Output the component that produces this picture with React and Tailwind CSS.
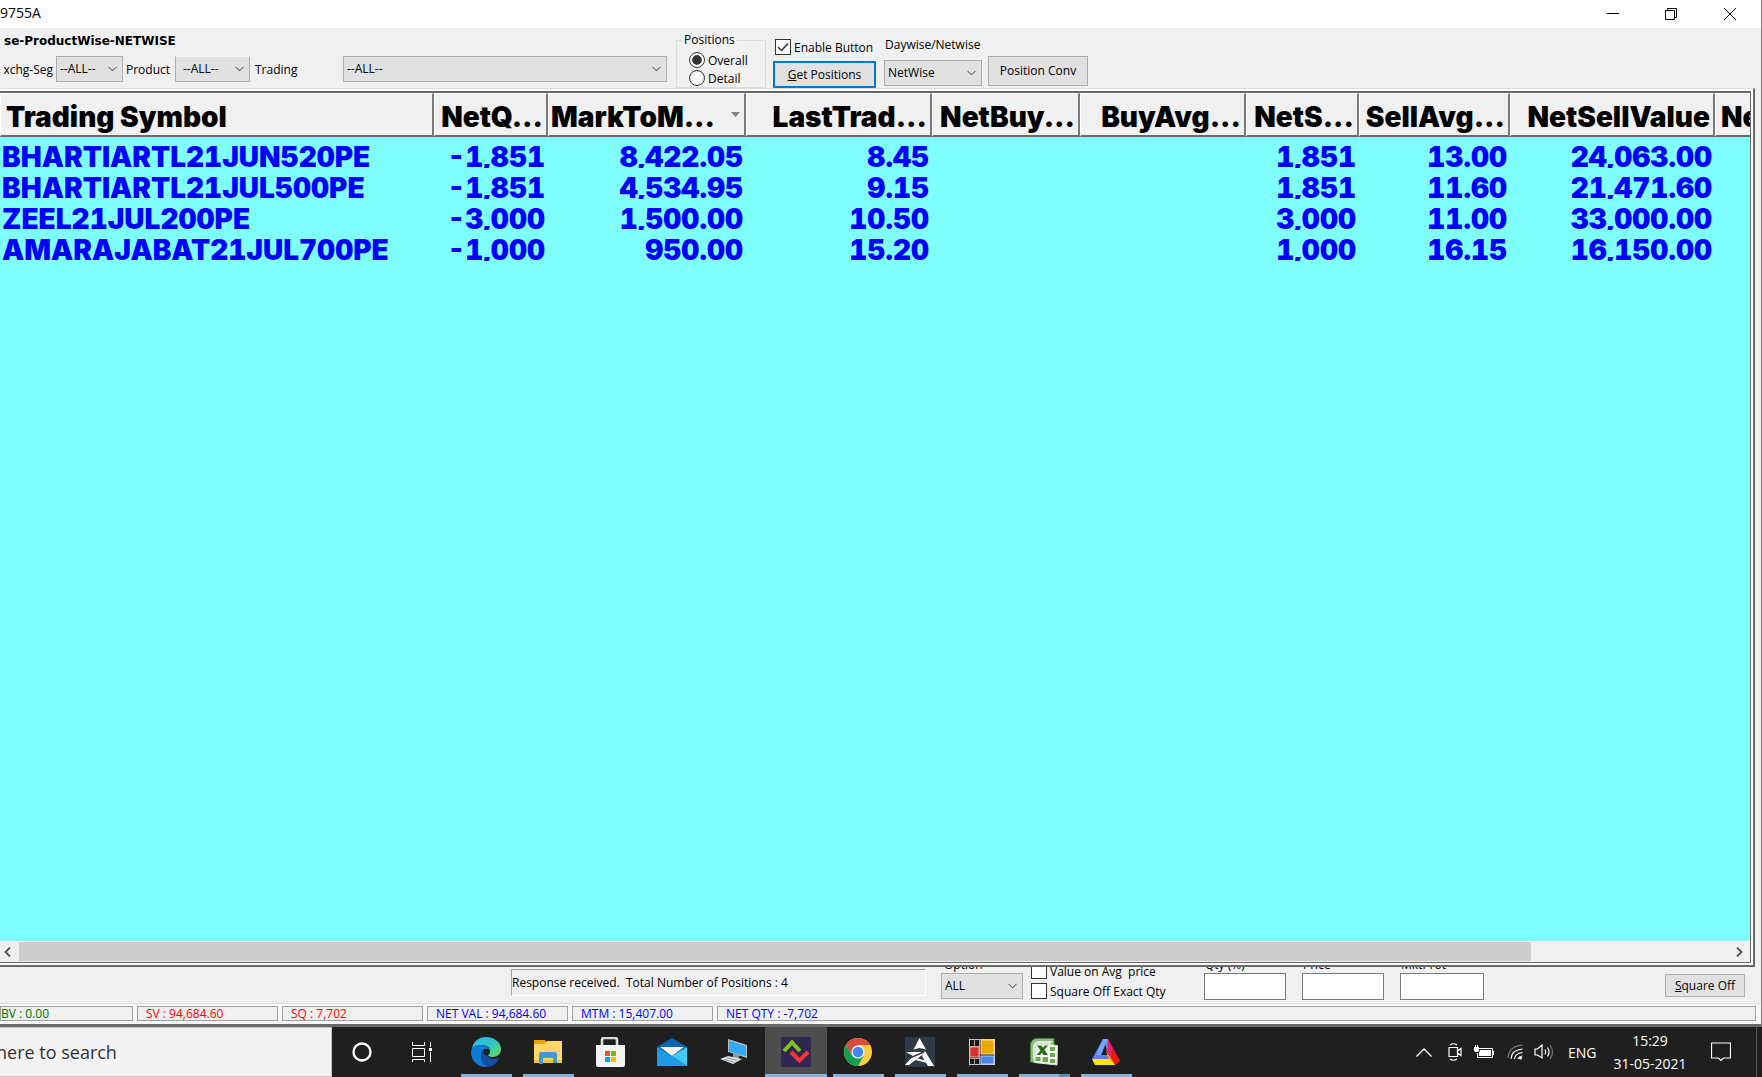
import { useState } from 'react'
import { ChevronDown } from 'lucide-react'

const columns = [
  { label: 'Trading Symbol', key: 'symbol', left: true },
  { label: 'NetQ...', key: 'netQty' },
  { label: 'MarkToM...', key: 'mtm', sorted: true },
  { label: 'LastTrad...', key: 'ltp' },
  { label: 'NetBuy...', key: 'netBuy' },
  { label: 'BuyAvg...', key: 'buyAvg' },
  { label: 'NetS...', key: 'netSell' },
  { label: 'SellAvg...', key: 'sellAvg' },
  { label: 'NetSellValue', key: 'sellValue' },
  { label: 'Ne', key: 'netValue', left: true },
]

const positions = [
  { symbol: 'BHARTIARTL21JUN520PE', netQty: '-1,851', mtm: '8,422.05', ltp: '8.45', netSell: '1,851', sellAvg: '13.00', sellValue: '24,063.00' },
  { symbol: 'BHARTIARTL21JUL500PE', netQty: '-1,851', mtm: '4,534.95', ltp: '9.15', netSell: '1,851', sellAvg: '11.60', sellValue: '21,471.60' },
  { symbol: 'ZEEL21JUL200PE', netQty: '-3,000', mtm: '1,500.00', ltp: '10.50', netSell: '3,000', sellAvg: '11.00', sellValue: '33,000.00' },
  { symbol: 'AMARAJABAT21JUL700PE', netQty: '-1,000', mtm: '950.00', ltp: '15.20', netSell: '1,000', sellAvg: '16.15', sellValue: '16,150.00' },
]

const totals = [
  { text: 'BV : 0.00', className: 'w-[133px] pl-0 text-[#007000]' },
  { text: 'SV : 94,684.60', className: 'w-[141px] pl-2 text-[#ff0000]' },
  { text: 'SQ : 7,702', className: 'w-[141px] pl-2 text-[#ff0000]' },
  { text: 'NET VAL : 94,684.60', className: 'w-[141px] pl-2 text-[#0000ff]' },
  { text: 'MTM : 15,407.00', className: 'w-[141px] pl-2 text-[#0000ff]' },
  { text: 'NET QTY : -7,702', className: 'flex-1 pl-2 text-[#0000ff]' },
]

function Select({ label, options, className = '', wrap = '' }) {
  return (
    <div className={'relative ' + wrap}>
      <select
        aria-label={label}
        className={'h-full w-full appearance-none border border-[#adadad] bg-[#e1e1e1] pr-4 pl-[3px] outline-none ' + className}
      >
        {options.map(o => <option key={o}>{o}</option>)}
      </select>
      <ChevronDown size={15} strokeWidth={1.5} className="pointer-events-none absolute top-1/2 right-[3px] -translate-y-1/2 text-[#333333]" />
    </div>
  )
}

function Check({ label, checked, onChange }) {
  return (
    <label className="flex h-4 items-center gap-[3px] whitespace-pre">
      <span className="grid h-4 w-4 shrink-0">
        <input
          type="checkbox"
          checked={checked}
          onChange={onChange}
          className="col-start-1 row-start-1 h-4 w-4 appearance-none border border-[#333333] bg-white"
        />
        {checked && (
          <svg viewBox="0 0 16 16" className="pointer-events-none col-start-1 row-start-1 h-4 w-4">
            <path d="M3 8 L6.5 11.5 L13 4.5" fill="none" stroke="#333" strokeWidth="1.5" />
          </svg>
        )}
      </span>
      <span className="pt-px">{label}</span>
    </label>
  )
}

function Radio({ label, checked, onChange }) {
  return (
    <label className="flex h-4 items-center gap-[3px]">
      <input
        type="radio"
        name="positions"
        checked={checked}
        onChange={onChange}
        className="h-4 w-4 appearance-none rounded-full border border-[#333333] bg-white bg-clip-content p-[2px] checked:bg-[#333333] checked:shadow-[inset_0_0_0_2px_#ffffff]"
      />
      <span className="pt-px">{label}</span>
    </label>
  )
}

function TitleBar() {
  return (
    <header className="flex h-7 shrink-0 items-center justify-between bg-white">
      <h1 className="mb-[3px] h-6 text-[14px] leading-6">9755A</h1>
      <div className="flex h-6 items-center pr-px">
        <button aria-label="Minimize" className="flex w-[58px] justify-center">
          <svg width="12" height="12" viewBox="0 0 12 12"><path d="M0 5.5H12" stroke="#000" /></svg>
        </button>
        <button aria-label="Restore" className="flex w-[58px] justify-center">
          <svg width="12" height="12" viewBox="0 0 12 12" fill="none" stroke="#000">
            <path d="M.5 2.5H9.5V11.5H.5ZM2.5 2.5V.5H11.5V9.5H9.5" />
          </svg>
        </button>
        <button aria-label="Close" className="flex w-[60px] justify-center">
          <svg width="12" height="12" viewBox="0 0 12 12"><path d="M0 0L12 12M12 0L0 12" stroke="#000" /></svg>
        </button>
      </div>
    </header>
  )
}

function Toolbar() {
  const [view, setView] = useState('Overall')
  const [enabled, setEnabled] = useState(true)

  return (
    <div className="flex h-[60px] shrink-0 items-start">
      <div className="shrink-0 pt-[5px]">
        <h2 className="pl-1 font-['DejaVu_Sans',sans-serif] text-[12px] leading-4 font-bold">se-ProductWise-NETWISE</h2>
        <div className="mt-[7px] flex h-[26px] items-center">
          <span className="w-14 pt-px pr-[3px] text-right">xchg-Seg</span>
          <Select label="Exchange segment" options={['--ALL--']} wrap="h-[26px] w-[67px]" />
          <span className="w-[52px] pt-px pl-[3px]">Product</span>
          <Select label="Product" options={['--ALL--']} wrap="h-[26px] w-[75px]" className="border-t-[#f0f0f0] pl-[7px]" />
          <span className="w-[93px] pt-px pl-[5px]">Trading</span>
          <Select label="Trading" options={['--ALL--']} wrap="h-[26px] w-[324px]" />
        </div>
      </div>

      <fieldset className="mt-1 ml-[9px] h-[56px] w-[90px] shrink-0 border border-[#dcdcdc] px-3">
        <legend className="-ml-[7px] px-[2px] leading-4">Positions</legend>
        <div className="flex flex-col gap-[2px] pt-1">
          <Radio label="Overall" checked={view === 'Overall'} onChange={() => setView('Overall')} />
          <Radio label="Detail" checked={view === 'Detail'} onChange={() => setView('Detail')} />
        </div>
      </fieldset>

      <div className="ml-[7px] w-[103px] shrink-0 pt-[11px]">
        <div className="pl-[2px]">
          <Check label="Enable Button" checked={enabled} onChange={e => setEnabled(e.target.checked)} />
        </div>
        <button className="mt-[6px] h-[27px] w-full border-2 border-[#0078d7] bg-[#e1e1e1]">
          <span className="underline">G</span>et Positions
        </button>
      </div>

      <div className="ml-2 w-[98px] shrink-0 pt-[9px]">
        <p className="pl-px leading-4 whitespace-nowrap">Daywise/Netwise</p>
        <Select label="Daywise/Netwise" options={['NetWise', 'DayWise']} wrap="mt-[7px] h-[26px]" />
      </div>

      <button className="mt-7 ml-[6px] h-[30px] w-[100px] shrink-0 border border-[#adadad] bg-[#e1e1e1]">Position Conv</button>
    </div>
  )
}

function PositionsTable() {
  return (
    <div className="flex-1 overflow-hidden bg-[#80ffff]">
      <table className="w-full table-fixed border-collapse font-['Inter',sans-serif] text-[28px]">
        <colgroup>
          <col className="w-[434px]" />
          <col className="w-[114px]" />
          <col className="w-[198px]" />
          <col className="w-[186px]" />
          <col className="w-[148px]" />
          <col className="w-[166px]" />
          <col className="w-[113px]" />
          <col className="w-[151px]" />
          <col className="w-[205px]" />
          <col />
        </colgroup>
        <thead>
          <tr>
            {columns.map(c => (
              <th key={c.key} className="group overflow-hidden p-0 font-black">
                <div className={'flex h-11 items-center border-t border-r-2 border-b-2 border-l border-t-white border-r-[#7a7a7a] border-b-[#696969] border-l-white bg-[#f0f0f0] pt-1 whitespace-nowrap group-last:border-r-0 ' + (c.left ? 'pl-[5px]' : 'justify-end pr-[3px]')}>
                  {c.label}
                  {c.sorted && (
                    <svg width="9" height="5" viewBox="0 0 9 5" className="mr-px mb-1 ml-4 shrink-0"><path d="M0 0H9L4.5 5Z" fill="#808080" /></svg>
                  )}
                </div>
              </th>
            ))}
          </tr>
        </thead>
        <tbody className="font-black text-[#0000ff] tabular-nums">
          {positions.map(p => (
            <tr key={p.symbol}>
              {columns.map(c => (
                <td key={c.key} className="p-0">
                  <div className={'h-[31px] overflow-hidden leading-[41px] whitespace-nowrap ' + (c.left ? 'pl-[2px]' : 'pr-[3px] text-right')}>
                    {p[c.key]}
                  </div>
                </td>
              ))}
            </tr>
          ))}
        </tbody>
      </table>
    </div>
  )
}

function ScrollBar() {
  return (
    <div className="flex h-[21px] shrink-0 items-stretch border-t border-white bg-[#f0f0f0]">
      <button aria-label="Scroll left" className="flex w-[19px] items-center justify-center pr-1">
        <svg width="7" height="10" viewBox="0 0 7 10"><path d="M6 .5L1.5 5L6 9.5" fill="none" stroke="#505050" strokeWidth="1.8" /></svg>
      </button>
      <div className="flex-1">
        <div className="h-[19px] w-[calc(100%-197px)] bg-[#cdcdcd]" />
      </div>
      <button aria-label="Scroll right" className="flex w-[22px] items-center justify-center">
        <svg width="7" height="10" viewBox="0 0 7 10"><path d="M1 .5L5.5 5L1 9.5" fill="none" stroke="#505050" strokeWidth="1.8" /></svg>
      </button>
    </div>
  )
}

function SmallField({ label, className }) {
  return (
    <label className={'flex shrink-0 flex-col ' + className}>
      <span className="h-4 pl-px leading-4 whitespace-nowrap">{label}</span>
      <input type="text" className="h-[27px] w-full border border-[#7a7a7a] bg-white px-1 outline-none" />
    </label>
  )
}

function SquareOffBar() {
  const [avg, setAvg] = useState(false)
  const [exact, setExact] = useState(false)

  return (
    <div className="flex h-9 shrink-0 items-end justify-between overflow-hidden pr-4">
      <div className="flex items-end">
        <div role="status" className="mb-[7px] ml-[511px] h-[27px] w-[415px] shrink-0 border border-t-[#a0a0a0] border-r-white border-b-white border-l-[#a0a0a0] leading-[25px] whitespace-pre">
          Response received.  Total Number of Positions : 4
        </div>
        <div className="mb-1 ml-[15px] flex w-[82px] shrink-0 flex-col">
          <span className="h-4 pl-[3px] leading-4">Option</span>
          <Select label="Option" options={['ALL']} wrap="h-[26px]" />
        </div>
        <div className="mb-1 ml-2 flex w-[173px] shrink-0 flex-col gap-1">
          <Check label="Value on Avg  price" checked={avg} onChange={e => setAvg(e.target.checked)} />
          <Check label="Square Off Exact Qty" checked={exact} onChange={e => setExact(e.target.checked)} />
        </div>
        <SmallField label="Qty (%)" className="mb-[3px] w-[82px]" />
        <SmallField label="Price" className="mb-[3px] ml-4 w-[82px]" />
        <SmallField label="MktProt" className="mb-[3px] ml-4 w-[84px]" />
      </div>
      <button className="mb-[6px] h-[23px] w-20 shrink-0 border border-[#adadad] bg-[#e1e1e1]">
        <span className="underline">S</span>quare Off
      </button>
    </div>
  )
}

function TotalsBar() {
  return (
    <div className="flex h-6 shrink-0 gap-1 border-t border-b-[3px] border-t-[#dcdcdc] border-b-[#696969] bg-[#f8f8f8] pt-[2px] pr-[5px] pb-[3px] text-[12px]">
      {totals.map(t => (
        <div key={t.text} className={'border border-[#a0a0a0] bg-[#f0f0f0] leading-[13px] whitespace-nowrap ' + t.className}>{t.text}</div>
      ))}
    </div>
  )
}

function EdgeIcon() {
  return (
    <svg width="30" height="30" viewBox="0 0 30 30">
      <defs>
        <linearGradient id="edgeTop" x1="0" y1="0" x2="1" y2="1">
          <stop offset="0" stopColor="#2fb4e9" />
          <stop offset=".5" stopColor="#2ec4c8" />
          <stop offset="1" stopColor="#6be04a" />
        </linearGradient>
      </defs>
      <path d="M1 12C2 4 8 0 15 0c9 0 15 6 15 12 0 5-4 8-8 8-3 0-5-1-5-2 0-1 2-2 2-4 0-4-4-6-8-6-5 0-9 2-10 4Z" fill="url(#edgeTop)" />
      <path d="M0 15C0 9 6 8 10 8c5 0 9 3 9 6 0 0-2-2-4-2-4 0-5 4-5 7 0 5 4 9 8 11C6 31 0 23 0 15Z" fill="#0c7bd8" />
      <path d="M10 18c0-3 2-5 5-6-1 7 5 12 12 9 1 0 1 0 1 1-3 5-7 8-12 8-4-2-6-7-6-12Z" fill="#134f9e" />
      <circle cx="15.500" cy="15" r="3.200" fill="#1f1f1f" />
    </svg>
  )
}

function FolderIcon() {
  return (
    <svg width="28" height="26" viewBox="0 0 28 26">
      <path d="M0 1h11l2 3v4H0Z" fill="#e8a200" />
      <path d="M0 5h10l3-3h15v22H0Z" fill="#ffd667" />
      <path d="M0 21h28v3H0Z" fill="#f3c04a" />
      <path d="M5 24V15q0-2 2-2h14q2 0 2 2v9h-4v-5h-10v6H5Z" fill="#3f97dc" />
    </svg>
  )
}

function StoreIcon() {
  return (
    <svg width="30" height="30" viewBox="0 0 30 30">
      <path d="M7 9V3q0-2 2-2h11q2 0 2 2v6" fill="none" stroke="#dcdcdc" strokeWidth="2.600" />
      <path d="M1 8h29v20q0 2-2 2H3q-2 0-2-2Z" fill="#f4f4f4" />
      <path d="M10 14h5v5h-5Z" fill="#f25022" />
      <path d="M16 14h5v5h-5Z" fill="#7fba00" />
      <path d="M10 20h5v5h-5Z" fill="#00a4ef" />
      <path d="M16 20h5v5h-5Z" fill="#ffb900" />
    </svg>
  )
}

function MailIcon() {
  return (
    <svg width="30" height="28" viewBox="0 0 30 28">
      <path d="M0 9L15 0L30 9L15 18Z" fill="#0b64b4" />
      <path d="M3 9h24L15 18Z" fill="#f4f4f4" />
      <path d="M0 9L15 18L30 28H0Z" fill="#1f9ce6" />
      <path d="M30 9L15 18L30 28Z" fill="#3dccf5" />
    </svg>
  )
}

function ComputerIcon() {
  return (
    <svg width="28" height="26" viewBox="0 0 28 26">
      <path d="M8 0L27 6V19L8 13Z" fill="#b9c2c9" />
      <path d="M9 1.500L26 7V17.500L9 12.500Z" fill="#35aaf8" />
      <path d="M13 14l6 2v3h-6Z" fill="#8d979e" />
      <path d="M0 20L8 17L22 20L13 25Z" fill="#dfe3e6" />
      <path d="M4 20.500l10 2.500M7 19l10 2.200" stroke="#8d979e" />
    </svg>
  )
}

function TraderIcon() {
  return (
    <svg width="30" height="30" viewBox="0 0 30 30">
      <rect width="30" height="30" rx="1" fill="#2e2850" />
      <path d="M3 14L11 5.500L19 14" fill="none" stroke="#80c41c" strokeWidth="4" />
      <path d="M10 15L18.500 23.500L27 15" fill="none" stroke="#f8333c" strokeWidth="4" />
    </svg>
  )
}

function ChromeIcon() {
  return (
    <svg width="28" height="28" viewBox="0 0 28 28">
      <circle cx="14" cy="14" r="14" fill="#ffcd40" />
      <path d="M1.880 7A14 14 0 0 1 26.120 7H14L8 17.500Z" fill="#db4b3f" />
      <path d="M1.880 7A14 14 0 0 0 14 28L20 17.500L14 14L8 17.500Z" fill="#0f9d58" />
      <circle cx="14" cy="14" r="6.600" fill="#f1f1f1" />
      <circle cx="14" cy="14" r="5.200" fill="#4285f4" />
    </svg>
  )
}

function PeakIcon() {
  return (
    <svg width="30" height="30" viewBox="0 0 30 30">
      <rect width="30" height="30" fill="#2f3b47" />
      <path d="M14.500 1L21 12.500L14.500 11L8.500 12.500Z" fill="#fff" />
      <path d="M1 15H21L4 28H0L8 19Z" fill="#fff" />
      <path d="M20 14L29 29H23L17 19Z" fill="#fff" />
      <path d="M0 23L19 15" stroke="#2f3b47" strokeWidth="1.500" />
      <path d="M11 22L22 25" stroke="#fff" strokeWidth="2" />
    </svg>
  )
}

function BlocksIcon() {
  return (
    <svg width="26" height="26" viewBox="0 0 26 26">
      <rect x=".5" y=".5" width="25" height="25" fill="#1a1a1a" stroke="#c9c9c9" />
      <path d="M5.500 0V7M0 7.500H11M5.500 19V26M0 19.500H11M10.500 0V26" stroke="#a0a0a0" />
      <rect x="1" y="8" width="9" height="10" fill="#d93030" stroke="#f0a8a8" />
      <rect x="12" y="1" width="13" height="14" fill="#eda900" stroke="#ffe28a" />
      <rect x="12" y="17" width="13" height="8" fill="#4a86ec" stroke="#b5d0ff" />
    </svg>
  )
}

function ExcelIcon() {
  return (
    <svg width="28" height="28" viewBox="0 0 28 28">
      <path d="M.5 24V6Q2 .5 7 .5H24V7L7 24.500Z" fill="#8fbb80" stroke="#3e8a2d" />
      <path d="M3 22V8Q4 3 9 3H23L6 21Z" fill="#dcebd6" />
      <path d="M6.500 5.500L27.500 7.500L27 27L4 24.500Z" fill="#f5faf2" stroke="#cfe0c8" />
      <path d="M20 9h5v4h-5ZM20 15h5v4h-5ZM20 21h5v4h-5ZM12.500 19h5.500v5h-5.500ZM5.500 19h5v4h-5Z" fill="#6bab55" />
      <path d="M7 7.500h4.500L18 17h-4.500ZM15 7.500h3L10 17H6.500Z" fill="#276b1c" />
    </svg>
  )
}

function PrismIcon() {
  return (
    <svg width="28" height="28" viewBox="0 0 28 28">
      <path d="M0 21L11 1h5L9 17H17l3 4Z" fill="#5b7cff" />
      <path d="M11 1h5l3 10-4 1-2-6L9 17H4Z" fill="#7db8ff" opacity=".7" />
      <path d="M16 1L28 23l-5 4-9-15 2-3Z" fill="#e0246f" />
      <path d="M20 9L28 23l-5 4-4-8Z" fill="#f4121d" />
      <path d="M0 21H17L14 13l9 14H3Z" fill="#ffe600" />
      <path d="M14 13L23 27l-6-6Z" fill="#ff9b00" />
    </svg>
  )
}

const taskbarApps = [
  { name: 'Edge', Icon: EdgeIcon, running: true },
  { name: 'File Explorer', Icon: FolderIcon, running: true },
  { name: 'Store', Icon: StoreIcon },
  { name: 'Mail', Icon: MailIcon },
  { name: 'Remote Desktop', Icon: ComputerIcon },
  { name: 'Trader', Icon: TraderIcon, running: true, active: true },
  { name: 'Chrome', Icon: ChromeIcon, running: true },
  { name: 'Peak', Icon: PeakIcon, running: true },
  { name: 'Blocks', Icon: BlocksIcon, running: true },
  { name: 'Excel', Icon: ExcelIcon, running: true, stacked: true },
  { name: 'Prism', Icon: PrismIcon, running: true },
]

function Taskbar() {
  return (
    <footer className="flex h-[50px] shrink-0 bg-[#1f1f1f] text-white">
      <input
        type="text"
        aria-label="Search"
        placeholder="here to search"
        className="w-[332px] shrink-0 border border-l-0 border-[#c4c4c4] bg-[#f2f2f2] -indent-1 text-[18px] outline-none placeholder:text-[#333333]"
      />
      <button aria-label="Cortana" className="flex w-[60px] items-center justify-center">
        <svg width="20" height="20" viewBox="0 0 20 20"><circle cx="10" cy="10" r="8.500" fill="none" stroke="#fff" strokeWidth="2.400" /></svg>
      </button>
      <button aria-label="Task View" className="flex w-[63px] items-center justify-center pr-1">
        <svg width="20" height="20" viewBox="0 0 20 20" fill="none" stroke="#fff">
          <path d="M.5 0V3.500H12.500V0M.5 6.500H12.500V14.500H.5ZM.5 20V17.500H12.500V20M18.500 0V5M18.500 10V20" />
          <path d="M17 6h3v3h-3Z" fill="#fff" stroke="none" />
        </svg>
      </button>
      {taskbarApps.map(({ name, Icon, running, active, stacked }) => (
        <button key={name} aria-label={name} className={'flex w-[62px] shrink-0 flex-col items-center ' + (active ? 'bg-[#4d4d4d]' : '')}>
          <span className="flex h-[47px] items-center pt-[3px]"><Icon /></span>
          {running && (
            <span className={'flex h-[3px] justify-end bg-[#76b9ed] ' + (active ? 'w-full' : 'w-[51px]')}>
              {stacked && <span className="w-[11px] bg-[#5a8fb8]" />}
            </span>
          )}
        </button>
      ))}

      <div className="ml-auto flex items-center pr-[5px]">
        <svg width="16" height="9" viewBox="0 0 16 9" className="mr-4"><path d="M.5 8.500L8 1L15.500 8.500" fill="none" stroke="#fff" strokeWidth="1.300" /></svg>
        <svg width="14" height="18" viewBox="0 0 14 18" className="mr-3" fill="none" stroke="#fff" strokeWidth="1.200">
          <path d="M1 4.500H9.500V13.500H1ZM9.500 8L13 5.500V12.500L9.500 10M2 2Q5.500-.5 9 2M2 16Q5.500 18.500 9 16" />
        </svg>
        <svg width="20" height="14" viewBox="0 0 20 14" className="mr-[13px]">
          <path d="M4.500 3.500H18.500V12.500H3.500V8" fill="none" stroke="#fff" />
          <path d="M6 5H17V11H5V8Z" fill="#fff" />
          <path d="M19 6h1v4h-1ZM0 2h5v3q0 2-2 2h-1q-2 0-2-2ZM1 0h1v2H1ZM3 0h1v2H3Z" fill="#fff" />
        </svg>
        <svg width="16" height="16" viewBox="0 0 16 16" className="mr-[11px]" fill="none" stroke="#fff" strokeWidth="1.100">
          <path d="M1 14Q2 2 15.500 1" stroke="#8a8a8a" />
          <path d="M4 15Q4.500 6 15.500 5M7.500 15Q8 9.500 15.500 8.500M11 15Q11.500 12.500 15.500 12" />
          <circle cx="13.500" cy="14" r="1.500" fill="#fff" stroke="none" />
        </svg>
        <svg width="20" height="18" viewBox="0 0 20 18" className="mr-[14px]" fill="none" stroke="#fff" strokeWidth="1.200">
          <path d="M1 6H3.500L8 2V15L3.500 12H1ZM11 6.500Q12.500 9 11 11.500M13.500 4.500Q16.500 9 13.500 13.500" />
          <path d="M16 2Q21 9 16 16" stroke="#777" />
        </svg>
        <span className="w-11 text-[14px]">ENG</span>
        <time className="flex w-[76px] flex-col items-center text-[14px] leading-[23px]">
          <span>15:29</span>
          <span>31-05-2021</span>
        </time>
        <svg width="20" height="20" viewBox="0 0 20 20" className="mr-[25px] ml-[23px]" fill="none" stroke="#fff" strokeWidth="1.200">
          <path d="M.5 1H19.500V16H12.500L10 18.500L7.500 16H.5Z" />
        </svg>
        <span className="h-[50px] w-px bg-[#555555]" />
      </div>
    </footer>
  )
}

export default function App() {
  return (
    <div className="flex min-h-screen flex-col overflow-hidden bg-[#f0f0f0] font-['Open_Sans',sans-serif] text-[12px] text-black">
      <main className="flex flex-1 flex-col border-r border-[#7a7a7a]">
        <TitleBar />
        <Toolbar />
        <section className="mr-[6px] flex flex-1 flex-col border-t border-r-2 border-b-2 border-t-[#dcdcdc] border-r-[#696969] border-b-[#696969] bg-white pt-[2px] pr-[2px] pb-[2px]">
          <div className="flex flex-1 flex-col border-t-2 border-r border-b border-[#696969]">
            <PositionsTable />
            <ScrollBar />
          </div>
        </section>
        <SquareOffBar />
        <TotalsBar />
      </main>
      <Taskbar />
    </div>
  )
}
